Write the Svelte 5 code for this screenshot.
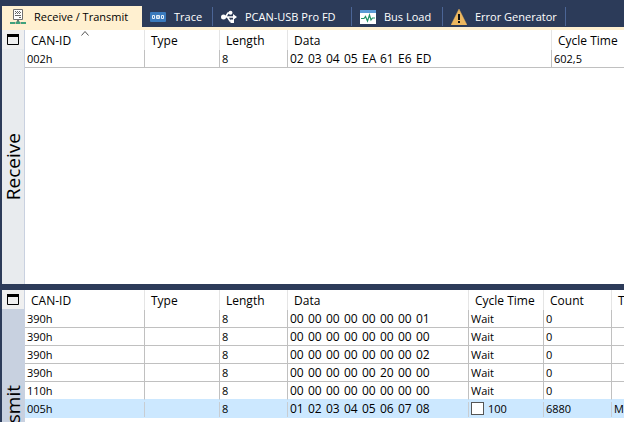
<script>
  const tabs = [
    { id: 'rxtx', label: 'Receive / Transmit' },
    { id: 'trace', label: 'Trace' },
    { id: 'usb', label: 'PCAN-USB Pro FD' },
    { id: 'load', label: 'Bus Load' },
    { id: 'error', label: 'Error Generator' }
  ];
  let active = $state('rxtx');
  let cyclic = $state(false);

  const received = [{ id: '002h', length: 8, data: '02 03 04 05 EA 61 E6 ED', cycle: '602,5' }];
  const transmit = [
    { id: '390h', data: '00 00 00 00 00 00 00 01', cycle: 'Wait', count: 0 },
    { id: '390h', data: '00 00 00 00 00 00 00 00', cycle: 'Wait', count: 0 },
    { id: '390h', data: '00 00 00 00 00 00 00 02', cycle: 'Wait', count: 0 },
    { id: '390h', data: '00 00 00 00 00 20 00 00', cycle: 'Wait', count: 0 },
    { id: '110h', data: '00 00 00 00 00 00 00 00', cycle: 'Wait', count: 0 },
    { id: '005h', data: '01 02 03 04 05 06 07 08', cycle: '100', count: 6880, trigger: 'Manual', selected: true }
  ];
</script>

{#snippet icon(id)}
  <svg class="icon" viewBox="0 0 16 16" aria-hidden="true">
    {#if id === 'rxtx'}
      <path d="M3.5 .5h9v10h-9z" fill="#fff" stroke="#707070" />
      <path d="M5 2h1v1H5zM7 2h1v1H7zM9 2h1v1H9zM6 3h1v1H6zM8 3h1v1H8zM10 3h1v1h-1zM5 4h1v1H5zM7 4h1v1H7zM9 4h1v1H9zM5 6h6v1H5zM9 8h2v1H9z" fill="#666" />
      <path d="M7 11h2v2H7z" fill="#707070" />
      <path d="M0 13h5v2H0zM11 13h5v2h-5zM6 12.5h4V15H6z" fill="#3fa27c" />
      <path d="M5 13.5h1v1H5zM10 13.5h1v1h-1z" fill="#707070" />
    {:else if id === 'trace'}
      <rect y="3" width="16" height="10" rx="1" fill="#3a7abd" />
      <path d="M2.5 6.5h2v3h-2zM6.5 6.5h3v3h-3zM11.5 6.5h2v3h-2z" fill="none" stroke="#e4eef8" />
      <path d="M7.5 7h1v2h-1z" fill="#fff" />
    {:else if id === 'usb'}
      <path d="M2 8h11M4.500 8 7 4h2M6.500 8l2.500 4h2" fill="none" stroke="#fff" stroke-width="1.6" />
      <circle cx="2.500" cy="8" r="2.500" fill="#fff" />
      <circle cx="9.500" cy="3.800" r="2" fill="#fff" />
      <path d="M9.500 10.500H13V14H9.500zM12 5l4 3-4 3z" fill="#fff" />
    {:else if id === 'load'}
      <path d="M0 1h16v14H0z" fill="#fff" />
      <path d="M0 1h16v3H0z" fill="#5b9bd5" />
      <path d="M1 9.500h3l1.500-2 2 4.500 2-6 1.500 5 1.500-2H15" fill="none" stroke="#219467" stroke-width="1.2" />
    {:else}
      <path d="M8 0 16 16H0z" fill="#edb75f" stroke="#edb75f" stroke-linejoin="round" stroke-width=".4" />
      <path d="M7 5h2v6H7zM7 12h2v2H7z" fill="#111" />
    {/if}
  </svg>
{/snippet}

{#snippet bytes(data)}
  <span class="bytes">{#each data.split(' ') as byte}<span>{byte}</span>{/each}</span>
{/snippet}

{#snippet rail(label)}
  <div class="rail">
    <button class="toggle" aria-label="Maximize {label}">
      <svg viewBox="0 0 12 11" aria-hidden="true"><path d="M.5.5h11v10H.5z" fill="none" stroke="#000" /><path d="M0 0h12v3H0z" /></svg>
    </button>
    <div class="label"><span>{label}</span></div>
  </div>
{/snippet}

<div class="app">
  <div class="tabs" role="tablist">
    {#each tabs as tab}
      <button role="tab" aria-selected={active === tab.id} class:active={active === tab.id} onclick={() => (active = tab.id)}>
        {@render icon(tab.id)}<span>{tab.label}</span>
      </button>
    {/each}
  </div>

  <main>
    <section class="receive">
      {@render rail('Receive')}
      <div class="grid">
        <table>
          <colgroup><col class="id" /><col class="type" /><col class="len" /><col class="wide" /><col /></colgroup>
          <thead>
            <tr>
              <th aria-sort="ascending">CAN-ID
                <svg class="sort" viewBox="0 0 8 5" aria-hidden="true"><path d="m.5 4.5 3.5-4 3.5 4" fill="none" stroke="#555" /></svg>
              </th>
              <th>Type</th><th>Length</th><th>Data</th><th>Cycle Time</th>
            </tr>
          </thead>
          <tbody>
            {#each received as row}
              <tr><td>{row.id}</td><td></td><td>{row.length}</td><td>{@render bytes(row.data)}</td><td>{row.cycle}</td></tr>
            {/each}
          </tbody>
        </table>
      </div>
    </section>

    <section class="transmit">
      {@render rail('Transmit')}
      <div class="grid">
        <table>
          <colgroup><col class="id" /><col class="type" /><col class="len" /><col class="data" /><col class="type" /><col class="len" /><col /></colgroup>
          <thead>
            <tr><th>CAN-ID</th><th>Type</th><th>Length</th><th>Data</th><th>Cycle Time</th><th>Count</th><th>Trigger</th></tr>
          </thead>
          <tbody>
            {#each transmit as row}
              <tr class:selected={row.selected}>
                <td>{row.id}</td><td></td><td>8</td><td>{@render bytes(row.data)}</td>
                <td>
                  {#if row.selected}
                    <label><input type="checkbox" bind:checked={cyclic} />{row.cycle}</label>
                  {:else}{row.cycle}{/if}
                </td>
                <td>{row.count}</td><td>{row.trigger ?? ''}</td>
              </tr>
            {/each}
          </tbody>
        </table>
      </div>
    </section>
  </main>
</div>

<style>
  .app {
    display: flex;
    flex-direction: column;
    height: 100vh;
    box-sizing: border-box;
    padding: 6px 0 0 2px;
    overflow: hidden;
    background: #2c3b59;
    color: #000;
    font: 12px/17px "Open Sans", "Noto Sans", sans-serif;
  }
  button { border: 0; margin: 0; font: inherit; color: inherit; }
  .tabs {
    display: grid;
    grid-template-columns: 140px 71px 139px 91px 123px;
    height: 21px;
    flex: none;
    border-bottom: 3px solid #fff0d0;
  }
  .tabs button {
    display: flex;
    align-items: center;
    gap: 8px;
    padding: 0 0 0 8px;
    background: linear-gradient(#4b6596, #4b6596) right center / 1px 19px no-repeat;
    color: #fff;
    white-space: nowrap;
    font-size: 11px;
  }
  .tabs button.active { background: #fff0d0; color: #000; }
  .icon { width: 16px; height: 16px; flex: none; }

  main { flex: 1; min-height: 0; display: flex; flex-direction: column; gap: 6px; }
  section { display: flex; min-height: 0; background: #fff; }
  .receive { flex: 254 1 0; }
  .transmit { flex: 132 1 0; overflow: hidden; }
  .rail {
    flex: none;
    width: 22px;
    display: flex;
    flex-direction: column;
    border-right: 1px solid #c9d1e0;
    background: #e8ebee;
  }
  .transmit .rail { background: #c8d1e0; }
  .toggle { flex: none; height: 19px; padding: 4px 5px; background: #f0f0f0; line-height: 0; }
  .toggle svg { width: 12px; height: 11px; }
  .label { flex: 1; min-height: 0; display: flex; justify-content: center; align-items: center; }
  .transmit .label { align-items: flex-start; padding-top: 76px; }
  .label span {
    writing-mode: vertical-rl;
    transform: rotate(180deg);
    font-size: 19px;
    font-weight: 500;
    line-height: 24px;
    white-space: nowrap;
  }

  .grid { flex: 1; min-width: 0; overflow: hidden; }
  table { width: 100%; table-layout: fixed; border-collapse: separate; border-spacing: 0; font-size: 11px; }
  .id { width: 120px; }
  .type { width: 75px; }
  .len { width: 68px; }
  .data { width: 181px; }
  .wide { width: 264px; }
  th, td { text-align: left; white-space: nowrap; overflow: hidden; padding: 0 0 0 2px; font-weight: 400; }
  th { position: relative; height: 20px; padding: 0 0 0 6px; border-right: 1px solid #e5e5e5; font-size: 12px; }
  td { height: 17px; border-right: 1px solid #c0c0c0; border-bottom: 1px solid #c0c0c0; }
  th:last-child, td:last-child { border-right: 0; }
  .sort { position: absolute; left: 56px; top: 1px; width: 8px; height: 5px; }
  tr:has(+ .selected) td { border-bottom-color: #cce8ff; }
  .selected td {
    border-right-color: transparent;
    border-bottom-color: #cce8ff;
    background: linear-gradient(#c8cdd2, #c8cdd2) right center / 1px 15px no-repeat border-box #cce8ff;
  }
  .selected td:last-child { background: #cce8ff; }
  .bytes { display: flex; font-size: 12px; }
  .bytes span { width: 18px; }
  label { display: flex; align-items: center; gap: 4px; }
  input { appearance: none; width: 13px; height: 13px; margin: 0; border: 1px solid #555; background: #fff; }
  input:checked { background: #2f6fb5; }
</style>
